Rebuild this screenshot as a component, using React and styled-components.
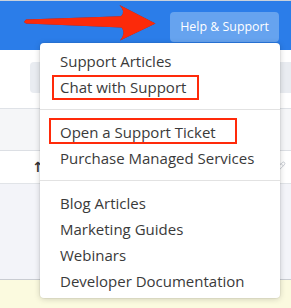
import React from "react";
import styled, { createGlobalStyle } from "styled-components";
import { Pencil } from "lucide-react";

const GlobalStyle = createGlobalStyle`
  html, body { margin: 0; padding: 0; background: #ffffff; }
  body { font-family: "Open Sans", "Noto Sans", sans-serif; overflow: hidden; }
  * { box-sizing: border-box; }
`;

const Page = styled.div`
  position: relative;
  width: 291px;
  height: 308px;
  overflow: hidden;
  display: flex;
  flex-direction: column;
`;

const TopBar = styled.header`
  height: 50px;
  flex: none;
  background: #2b7de9;
  border-top: 1px solid #c9d2dc;
  display: flex;
  justify-content: flex-end;
  align-items: flex-start;
  padding: 11px 12px 0 0;
`;

const HelpButton = styled.button`
  height: 30px;
  padding: 0 10px;
  border: none;
  border-radius: 4px;
  background: #66a3ef;
  color: #ffffff;
  font-family: "Open Sans", sans-serif;
  font-size: 12.4px;
  line-height: 30px;
  white-space: nowrap;
`;

const ToolbarArea = styled.div`
  height: 59px;
  flex: none;
  padding: 12px 0 0 30px;
  border-bottom: 1px solid #dfe2e7;
  background: #ffffff;
`;

const SearchBox = styled.div`
  height: 31px;
  border-radius: 4px 0 0 4px;
  background: #e9ecf1;
`;

const TableHead = styled.div`
  height: 42px;
  flex: none;
  background: #f5f6f8;
  border-bottom: 1px solid #dcdfe4;
`;

const TableRow = styled.div`
  height: 33px;
  flex: none;
  background: #ffffff;
  border-bottom: 1px solid #e1e4e8;
  display: flex;
  align-items: center;
  justify-content: space-between;
  padding: 0 5px 0 32px;
`;

const SortGlyph = styled.span`
  font-family: "DejaVu Sans", sans-serif;
  font-size: 14px;
  font-weight: bold;
  color: #333333;
  line-height: 1;
`;

const TableBody = styled.div`
  height: 96px;
  flex: none;
  background: #f3f4f9;
  border-bottom: 1px solid #c9ccd2;
`;

const Notice = styled.div`
  flex: 1;
  background: #fbfadf;
`;

const ArrowSvg = styled.svg`
  position: absolute;
  left: 0;
  top: 0;
  filter: drop-shadow(0 0 0.6px rgba(120, 0, 0, 0.6));
`;

const Menu = styled.nav`
  position: absolute;
  left: 40px;
  top: 43px;
  width: 240px;
  padding: 5px 0 4px;
  background: #ffffff;
  border-radius: 4px;
  box-shadow: 0 1px 6px rgba(0, 0, 0, 0.18), 0 0 0 1px rgba(0, 0, 0, 0.04);
`;

const MenuItem = styled.div`
  position: relative;
  height: 26px;
  padding: 0 20px;
  font-size: 15px;
  line-height: 26px;
  color: #3a3a3a;
  white-space: nowrap;
`;

const Highlight = styled.span`
  position: absolute;
  left: ${(p) => p.$left}px;
  top: ${(p) => p.$top}px;
  width: ${(p) => p.$width}px;
  height: ${(p) => p.$height}px;
  border: 2.5px solid #ff2a0a;
  pointer-events: none;
`;

const Divider = styled.hr`
  margin: 9px 0;
  border: none;
  border-top: 1px solid #e2e2e2;
  height: 0;
`;

const groups = [
  [
    { label: "Support Articles" },
    { label: "Chat with Support", box: { left: 12, top: 1, width: 147, height: 25 } },
  ],
  [
    { label: "Open a Support Ticket", box: { left: 9, top: -1, width: 188, height: 26 } },
    { label: "Purchase Managed Services" },
  ],
  [
    { label: "Blog Articles" },
    { label: "Marketing Guides" },
    { label: "Webinars" },
    { label: "Developer Documentation" },
  ],
];

export default function App() {
  return (
    <>
      <GlobalStyle />
      <Page>
        <TopBar>
          <HelpButton>Help &amp; Support</HelpButton>
        </TopBar>
        <ToolbarArea>
          <SearchBox />
        </ToolbarArea>
        <TableHead />
        <TableRow>
          <SortGlyph>↑</SortGlyph>
          <Pencil size={13} color="#c3c7ce" strokeWidth={1.6} />
        </TableRow>
        <TableBody />
        <Notice />

        <ArrowSvg width="170" height="50" viewBox="0 0 170 50">
          <path
            d="M24 22 L26 19.6 L121 16.2 Q126 12 119.5 5 L155.5 23.6 L120 40.5 Q126.5 33 121.5 27.6 L26 23.4 Z"
            fill="#fc2a0a"
          />
        </ArrowSvg>

        <Menu>
          {groups.map((group, gi) => (
            <React.Fragment key={gi}>
              {gi > 0 && <Divider />}
              {group.map((item) => (
                <MenuItem key={item.label}>
                  {item.label}
                  {item.box && (
                    <Highlight
                      $left={item.box.left}
                      $top={item.box.top}
                      $width={item.box.width}
                      $height={item.box.height}
                    />
                  )}
                </MenuItem>
              ))}
            </React.Fragment>
          ))}
        </Menu>
      </Page>
    </>
  );
}
